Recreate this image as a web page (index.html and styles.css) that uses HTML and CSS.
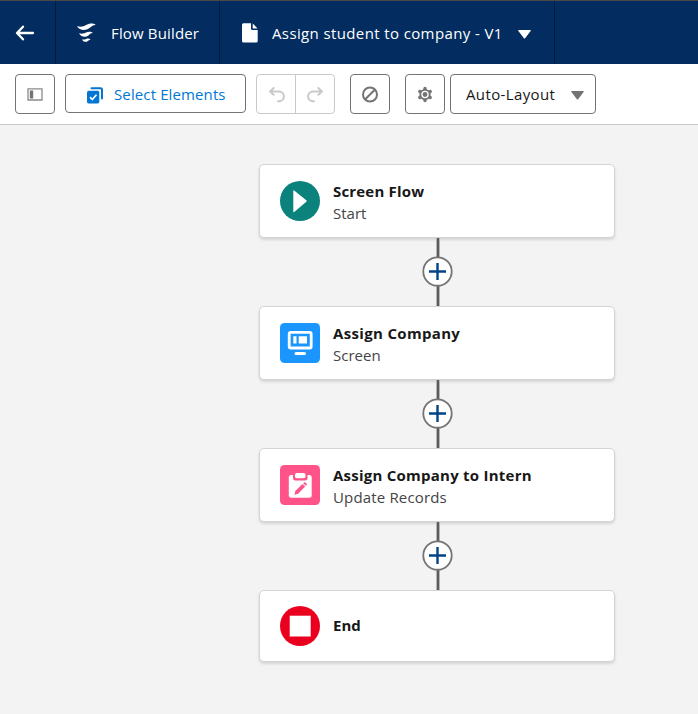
FILE: index.html
```html
<!DOCTYPE html>
<html lang="en">
<head>
<meta charset="utf-8">
<title>Flow Builder</title>
<link rel="stylesheet" href="styles.css">
</head>
<body>
<header class="header">
  <div class="back"><svg width="20" height="16" viewBox="0 0 20 16" fill="none" stroke="#fff" stroke-width="2.3" stroke-linecap="round" stroke-linejoin="round"><path d="M8 1.7 2 8l6 6.3M2.3 8H18"/></svg></div>
  <div class="brand">
    <svg width="20" height="20" viewBox="0 0 20 20" fill="#fff"><path d="M0 4.200C4 5.200 6.500 4.600 9 3.100 12.500.9 16 .9 18.800 2.900 15.500 2.900 14.500 4.500 12.500 6 9 8.500 3 9.200 0 4.200ZM2 11.300C5 12.100 7.200 11.600 9 10.600 11.500 9.200 14.200 9.300 16 11 13.500 10.900 13 12.300 11.400 13.400 8.600 15.400 4.200 15.500 2 11.300ZM5 17.300C6.800 17.800 8 17.500 9.200 16.900 10.800 16.200 12.500 16.400 13.600 17.700 12 17.600 11.700 18.400 10.600 19.200 8.800 20.400 6.200 20 5 17.300Z"/></svg>
    <span class="t-brand">Flow Builder</span>
  </div>
  <div class="flowname">
    <svg width="16" height="20" viewBox="0 0 16 20" fill="#fff"><path d="M1.500.3H9V5.500Q9 7 10.500 7H15.700V18Q15.700 19.500 14.200 19.500H1.500Q0 19.500 0 18V1.800Q0 .3 1.500.3ZM10.700.5 15.500 5.400H11.200Q10.700 5.400 10.700 4.900Z"/></svg>
    <span class="t-flow">Assign student to company - V1</span>
    <svg class="caret" width="13" height="9" viewBox="0 0 13 9"><path d="M.8 0H12.200Q13.300 0 12.600.9L7.100 8.200Q6.500 9 5.900 8.200L.4.9Q-.3 0 .8 0Z" fill="#fff"/></svg>
  </div>
</header>
<nav class="toolbar">
  <div class="btn sq"><svg width="16" height="14" viewBox="0 0 16 14"><path d="M1 1.800H15V13H1Z" fill="none" stroke="#8a8a8a" stroke-width="1.300"/><path d="M2.800 3.500H6.200V11.500H2.800Z" fill="#747474"/></svg></div>
  <div class="btn select">
    <svg width="16" height="17" viewBox="0 0 16 17"><path d="M4.500 1.200H13.500Q15 1.200 15 2.700V11.500" fill="none" stroke="#0176d3" stroke-width="2" stroke-linecap="round"/><rect y="3.700" width="12.300" height="12.800" rx="1.700" fill="#0176d3"/><path d="m3 10.200 2.300 2.300 4.200-4.700" fill="none" stroke="#fff" stroke-width="1.700"/></svg>
    <span class="t-select">Select Elements</span>
  </div>
  <div class="btn group">
    <div><svg width="18" height="18" viewBox="0 0 18 18" class="faint"><path d="M6.700 3 3 6.400 6.700 9.800M3.300 6.400H12A4.900 4.900 0 0 1 12 16.200H11"/></svg></div>
    <div><svg width="18" height="18" viewBox="0 0 18 18" class="faint"><path d="M12.300 3 16 6.400 12.300 9.800M15.700 6.400H7A4.900 4.900 0 0 0 7 16.200H8"/></svg></div>
  </div>
  <div class="btn sq ban"><svg width="18" height="18" viewBox="0 0 18 18" fill="none" stroke="#747474" stroke-width="2"><circle cx="9" cy="9.500" r="7"/><path d="M4.200 14.300 13.800 4.700"/></svg></div>
  <div class="btn sq gear"><svg width="18" height="18" viewBox="0 0 18 18"><path d="M9 3.500V15.500M3.800 6.500 14.200 12.500M3.800 12.500 14.200 6.500" stroke="#747474" stroke-width="3.400" stroke-linecap="round"/><circle cx="9" cy="9.500" r="5.600" fill="#747474"/><circle cx="9" cy="9.500" r="3.100" fill="#747474" stroke="#fff" stroke-width="1.300"/></svg></div>
  <div class="btn layout">
    <span class="t-layout">Auto-Layout</span>
    <svg class="caret" width="13" height="9" viewBox="0 0 13 9"><path d="M.8 0H12.200Q13.300 0 12.600.9L7.100 8.200Q6.500 9 5.900 8.200L.4.9Q-.3 0 .8 0Z" fill="#747474"/></svg>
  </div>
</nav>
<main class="canvas">
  <section class="card start">
    <svg class="icon" viewBox="0 0 40 40"><circle cx="20" cy="20" r="20" fill="#0b827c"/><path d="M13.300 10.200Q13.300 8.700 14.500 9.700L26.300 19.200Q27.200 20 26.300 20.800L14.500 30.800Q13.300 31.800 13.300 30.300Z" fill="#fff"/></svg>
    <div><h2 class="w1">Screen Flow</h2><p>Start</p></div>
  </section>
  <div class="link"><svg width="31" height="31" viewBox="0 0 31 31"><circle cx="15.500" cy="15.500" r="14.200" fill="#fff" stroke="#747474" stroke-width="1.800"/><path d="M15.500 7V24M7 15.500H24" stroke="#014486" stroke-width="2.400"/></svg></div>
  <section class="card">
    <svg class="icon" viewBox="0 0 40 40"><rect width="40" height="40" rx="4.500" fill="#1b96ff"/><rect x="9.200" y="9.400" width="22" height="15.600" rx="1.500" fill="none" stroke="#fff" stroke-width="2.800"/><path d="M13.300 13.300H16.500V20.500H13.300ZM18.700 13.300H27V20.500H18.700Z" fill="#fff"/><rect x="14.500" y="29" width="11.500" height="3" rx="1.500" fill="#fff"/></svg>
    <div><h2 class="w2">Assign Company</h2><p>Screen</p></div>
  </section>
  <div class="link"><svg width="31" height="31" viewBox="0 0 31 31"><circle cx="15.500" cy="15.500" r="14.200" fill="#fff" stroke="#747474" stroke-width="1.800"/><path d="M15.500 7V24M7 15.500H24" stroke="#014486" stroke-width="2.400"/></svg></div>
  <section class="card">
    <svg class="icon" viewBox="0 0 40 40"><rect width="40" height="40" rx="4.500" fill="#ff538a"/><rect x="8.800" y="10" width="22.900" height="22.700" rx="2.500" fill="#fff"/><path d="M13 9H27.500V13Q27.500 15.500 25 15.500H15.500Q13 15.500 13 13Z" fill="#ff538a"/><rect x="15" y="8" width="10.500" height="5.300" rx="1.800" fill="#fff"/><path d="M14.500 29.700 15.300 26 22.500 18.900 25.200 21.600 18.100 28.700ZM23.200 18.200 24 17.400Q24.600 16.900 25.200 17.400L26.600 18.800Q27.200 19.400 26.600 20L25.800 20.800Z" fill="#ff538a"/></svg>
    <div><h2 class="w3">Assign Company to Intern</h2><p class="s3">Update Records</p></div>
  </section>
  <div class="link"><svg width="31" height="31" viewBox="0 0 31 31"><circle cx="15.500" cy="15.500" r="14.200" fill="#fff" stroke="#747474" stroke-width="1.800"/><path d="M15.500 7V24M7 15.500H24" stroke="#014486" stroke-width="2.400"/></svg></div>
  <section class="card end">
    <svg class="icon" viewBox="0 0 40 40"><circle cx="20" cy="20" r="20" fill="#ea001e"/><path d="M9.700 9.700H30.700V30.500H9.700Z" fill="#fff"/></svg>
    <div><h2>End</h2></div>
  </section>
</main>
</body>
</html>
```
FILE: styles.css
```css
* { box-sizing: border-box; }
body { margin: 0; width: 698px; height: 714px; overflow: hidden; display: flex; flex-direction: column; background: #f3f3f3; font: 15px/22px "Open Sans", "Noto Sans", sans-serif; }
svg { display: block; flex: none; }
span, h2, p { white-space: nowrap; }
.header { height: 64px; flex: none; display: flex; background: #032d60; border-top: 1px solid #4a4a4a; color: #fff; }
.header > div { display: flex; align-items: center; border-right: 1px solid #021a3c; }
.back { width: 56px; padding-left: 15px; }
.brand { width: 164px; padding-left: 21px; gap: 14px; }
.brand svg { margin-top: -1px; }
.t-brand { letter-spacing: .15px; }
.flowname { width: 335px; padding-left: 22px; }
.t-flow { width: 230px; margin-left: 14px; letter-spacing: .38px; }
.flowname .caret { margin: 4px 0 0 16px; }
.toolbar { height: 61px; flex: none; display: flex; align-items: flex-start; padding: 10px 0 0 15px; background: #fff; border-bottom: 1px solid #c9c9c9; }
.btn { height: 40px; flex: none; display: flex; align-items: center; border: 1px solid #747474; border-radius: 4px; }
.sq { width: 40px; justify-content: center; }
.select { width: 181px; height: 39px; margin: 0 10px; padding-left: 21px; gap: 11px; color: #0176d3; }
.select svg { margin-top: 3px; }
.t-select { letter-spacing: .12px; }
.group { width: 79px; border-color: #c9c9c9; }
.group div { height: 100%; flex: 1; display: flex; align-items: center; justify-content: center; }
.group div + div { border-left: 1px solid #c9c9c9; }
.faint { fill: none; stroke: #c9c9c9; stroke-width: 2; stroke-linecap: round; stroke-linejoin: round; }
.ban, .gear { margin-left: 15px; }
.layout { width: 146px; margin-left: 5px; padding-left: 15px; color: #181818; }
.t-layout { width: 91px; letter-spacing: .37px; }
.layout .caret { margin: 3px 0 0 14px; }
.canvas { flex: 1; padding: 39px 0 0 259px; }
.card { width: 356px; height: 74px; display: flex; align-items: center; gap: 13px; padding-left: 20px; background: #fff; border: 1px solid #d4d4d4; border-radius: 5px; box-shadow: 0 2px 3px rgba(0, 0, 0, .13); }
.card > div { padding-top: 2px; }
.start { border-image: none; }
.end { height: 72px; }
.end > div { padding: 0 0 2px; }
.icon { width: 40px; height: 40px; }
h2 { margin: 0; font-size: 15px; line-height: 22px; font-weight: 700; color: #181818; }
p { margin: 0; color: #444; }
.w1 { letter-spacing: .18px; }
.w2 { letter-spacing: .33px; }
.w3 { letter-spacing: .24px; }
.s3 { letter-spacing: .16px; }
.link { height: 68px; width: 356px; display: flex; align-items: center; justify-content: center; padding: 0 0 1px 1px; background: linear-gradient(#5c5c5c, #5c5c5c) 178px 0 / 2px 100% no-repeat, linear-gradient(#b4b4b4, #b4b4b4) 177px 0 / 4px 100% no-repeat; }
```
